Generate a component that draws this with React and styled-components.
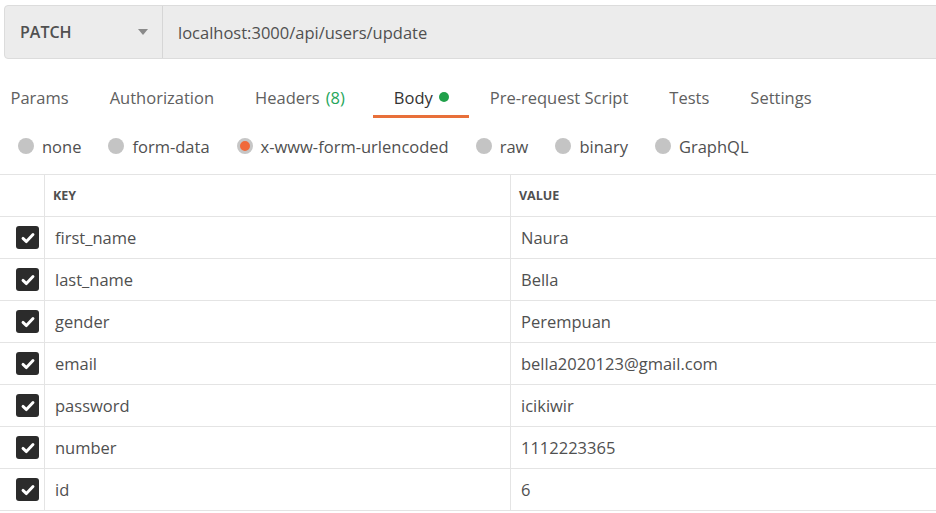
import React from 'react';
import styled, { createGlobalStyle } from 'styled-components';

const GlobalStyle = createGlobalStyle`
  body {
    margin: 0;
    background: #fff;
    font-family: "Open Sans", "Noto Sans", sans-serif;
    color: #505050;
    overflow: hidden;
  }
`;

const tabs = [
  { label: 'Params' },
  { label: 'Authorization' },
  { label: 'Headers', count: '(8)' },
  { label: 'Body', dot: true, active: true },
  { label: 'Pre-request Script' },
  { label: 'Tests' },
  { label: 'Settings' },
];

const bodyTypes = ['none', 'form-data', 'x-www-form-urlencoded', 'raw', 'binary', 'GraphQL'];

const rows = [
  ['first_name', 'Naura'],
  ['last_name', 'Bella'],
  ['gender', 'Perempuan'],
  ['email', 'bella2020123@gmail.com'],
  ['password', 'icikiwir'],
  ['number', '1112223365'],
  ['id', '6'],
];

const App = () => {
  return (
    <Page>
      <GlobalStyle />
      <UrlBar>
        <Method>
          <MethodName>PATCH</MethodName>
          <Caret />
        </Method>
        <UrlText>localhost:3000/api/users/update</UrlText>
      </UrlBar>

      <Tabs>
        {tabs.map(t => (
          <Tab key={t.label} active={t.active}>
            {t.label}
            {t.count && <Count>{t.count}</Count>}
            {t.dot && <Dot />}
          </Tab>
        ))}
      </Tabs>

      <Radios>
        {bodyTypes.map(b => (
          <RadioItem key={b}>
            <Radio checked={b === 'x-www-form-urlencoded'} />
            {b}
          </RadioItem>
        ))}
      </Radios>

      <Table>
        <Row>
          <CheckCell />
          <KeyCell><HeadText>KEY</HeadText></KeyCell>
          <ValueCell><HeadText>VALUE</HeadText></ValueCell>
        </Row>
        {rows.map(([k, v]) => (
          <Row key={k}>
            <CheckCell>
              <CheckBox>
                <svg width="16" height="16" viewBox="0 0 16 16">
                  <path d="M3 8.4 L6.4 11.6 L13 4.6" fill="none" stroke="#fff" strokeWidth="2.9" strokeLinecap="round" strokeLinejoin="round" />
                </svg>
              </CheckBox>
            </CheckCell>
            <KeyCell>{k}</KeyCell>
            <ValueCell>{v}</ValueCell>
          </Row>
        ))}
      </Table>
    </Page>
  );
};

const Page = styled.div`
  width: 936px;
  height: 513px;
  padding-top: 5px;
  box-sizing: border-box;
`
const UrlBar = styled.div`
  display: flex;
  align-items: stretch;
  height: 54px;
  margin-left: 4px;
  margin-right: -10px;
  background: #ececec;
  border: 1px solid #dcdcdc;
  border-radius: 4px;
  box-sizing: border-box;
`
const Method = styled.div`
  display: flex;
  align-items: center;
  justify-content: space-between;
  width: 158px;
  padding: 0 14px 0 15px;
  box-sizing: border-box;
  border-right: 1px solid #d6d6d6;
`
const MethodName = styled.span`
  font-size: 16px;
  font-weight: 600;
  color: #505050;
`
const Caret = styled.span`
  width: 0;
  height: 0;
  border-left: 5px solid transparent;
  border-right: 5px solid transparent;
  border-top: 6px solid #8a8a8a;
`
const UrlText = styled.div`
  display: flex;
  align-items: center;
  padding-left: 15px;
  font-size: 16.5px;
  color: #505050;
`
const Tabs = styled.div`
  display: flex;
  margin-top: 17px;
  margin-left: -10px;
`
const Tab = styled.div`
  display: flex;
  align-items: center;
  height: 42px;
  padding: 3px 20.5px 0;
  box-sizing: border-box;
  font-size: 16.5px;
  color: ${p => (p.active ? '#333' : '#606060')};
  border-bottom: 3px solid ${p => (p.active ? '#e8703a' : 'transparent')};
`
const Count = styled.span`
  margin-left: 6px;
  margin-right: 8px;
  color: #26a65b;
`
const Dot = styled.span`
  width: 10px;
  height: 10px;
  margin-left: 6px;
  border-radius: 50%;
  background: #20a04a;
`
const Radios = styled.div`
  display: flex;
  align-items: center;
  gap: 27px;
  height: 56px;
  padding-left: 18px;
`
const RadioItem = styled.div`
  display: flex;
  align-items: center;
  gap: 8px;
  font-size: 16.5px;
  color: #505050;
`
const Radio = styled.span`
  width: 16px;
  height: 16px;
  border-radius: 50%;
  box-sizing: border-box;
  background: ${p => (p.checked ? '#f0693a' : '#c4c4c4')};
  border: ${p => (p.checked ? '3px solid #c6c6c6' : 'none')};
`
const Table = styled.div`
  border-top: 1px solid #e4e4e4;
`
const Row = styled.div`
  display: grid;
  grid-template-columns: 45px 466px 1fr;
  height: 42px;
  border-bottom: 1px solid #e4e4e4;
  box-sizing: border-box;
  font-size: 16.5px;
  color: #505050;
`
const CheckCell = styled.div`
  display: flex;
  align-items: center;
  justify-content: flex-end;
  padding-right: 5px;
  border-right: 1px solid #e4e4e4;
`
const KeyCell = styled.div`
  display: flex;
  align-items: center;
  padding-left: 10px;
  border-right: 1px solid #e4e4e4;
`
const ValueCell = styled.div`
  display: flex;
  align-items: center;
  padding-left: 10px;
`
const HeadText = styled.span`
  font-size: 12.5px;
  font-weight: 700;
  color: #505050;
  margin-left: -2px;
`
const CheckBox = styled.span`
  display: flex;
  align-items: center;
  justify-content: center;
  width: 23px;
  height: 23px;
  border-radius: 3px;
  background: #2b2b2b;
`

export default App;
